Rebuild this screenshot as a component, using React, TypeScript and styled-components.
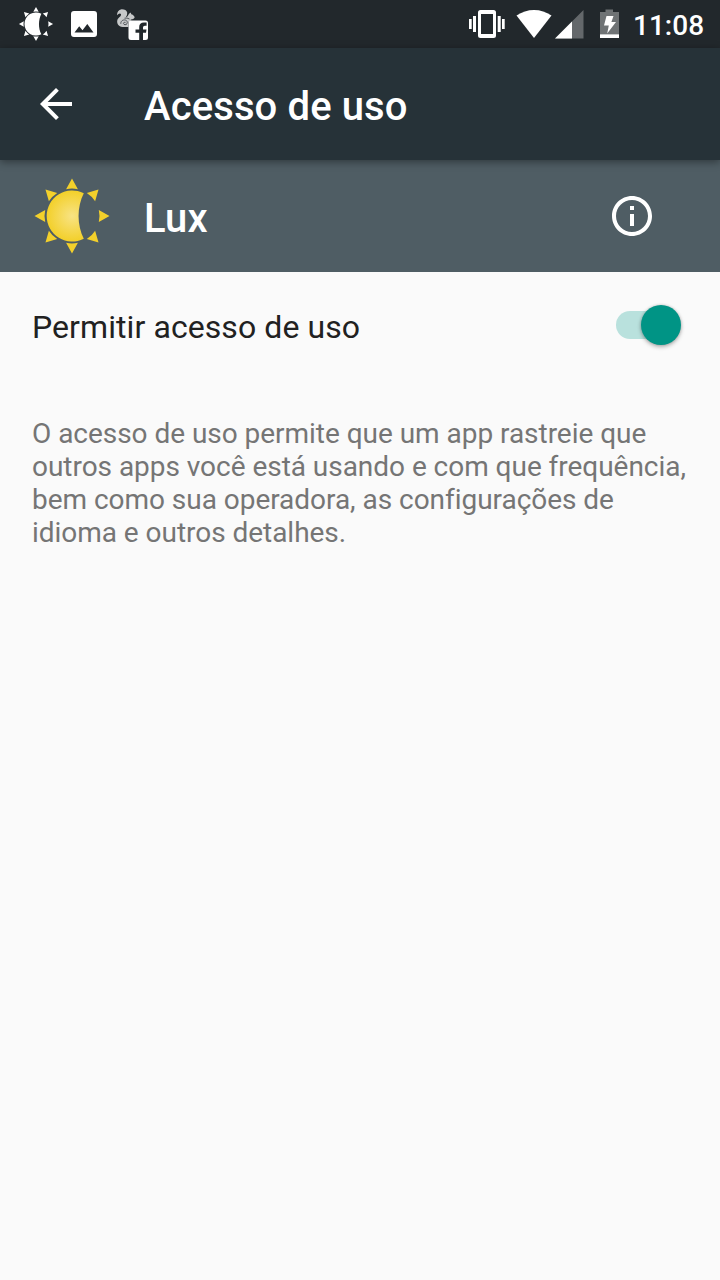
import React, { useState } from "react";
import styled, { createGlobalStyle } from "styled-components";

const GlobalStyle = createGlobalStyle`
  * { box-sizing: border-box; }
  html, body { margin: 0; background: #fafafa; }
  body { font-family: Roboto, "Liberation Sans", sans-serif; }
`;

const Screen = styled.div`
  width: 720px;
  min-height: 1280px;
  display: flex;
  flex-direction: column;
  background: #fafafa;
`;

const StatusBar = styled.div`
  height: 48px;
  display: flex;
  justify-content: space-between;
  background: #22282c;
`;

const StatusGroup = styled.div`
  display: flex;
  height: 48px;
  svg { display: block; }
`;

const Clock = styled.time`
  width: 96px;
  padding-left: 9px;
  font-size: 28px;
  line-height: 52px;
  font-weight: 500;
  color: #fff;
  white-space: nowrap;
`;

const AppBar = styled.header`
  height: 112px;
  display: flex;
  align-items: center;
  background: #263238;
  box-shadow: 0 2px 8px rgba(0, 0, 0, 0.4);
  z-index: 1;
`;

const IconButton = styled.button<{ $width: number }>`
  width: ${(p) => p.$width}px;
  height: 112px;
  padding: 0;
  border: 0;
  display: flex;
  align-items: center;
  justify-content: center;
  background: none;
  color: #fff;
`;

const Title = styled.h1`
  margin: 0;
  padding: 6px 0 0 32px;
  font-size: 40px;
  line-height: 48px;
  font-weight: 500;
  letter-spacing: 0.12px;
  color: #fff;
`;

const AppHeader = styled.section`
  height: 112px;
  padding-right: 32px;
  display: flex;
  align-items: center;
  background: #4f5d64;
`;

const AppIcon = styled.div`
  width: 112px;
  padding-left: 32px;
  svg { display: block; }
`;

const Spacer = styled.div`
  flex: 1;
`;

const PreferenceRow = styled.div`
  height: 112px;
  padding: 0 36px 0 32px;
  display: flex;
  align-items: center;
  justify-content: space-between;
`;

const PreferenceLabel = styled.span`
  margin-bottom: 2px;
  font-size: 32px;
  line-height: 38px;
  letter-spacing: 0.08px;
  color: #212121;
`;

const Track = styled.button<{ $on: boolean }>`
  width: 64px;
  height: 28px;
  margin: 0 4px 6px 0;
  padding: 0;
  border: 0;
  border-radius: 14px;
  display: flex;
  align-items: center;
  justify-content: ${(p) => (p.$on ? "flex-end" : "flex-start")};
  background: ${(p) => (p.$on ? "#b9e1dd" : "#bdbdbd")};
`;

const Thumb = styled.span<{ $on: boolean }>`
  width: 40px;
  height: 40px;
  flex: none;
  margin-right: -1px;
  border-radius: 50%;
  background: ${(p) => (p.$on ? "#009485" : "#f1f1f1")};
  box-shadow: 0 2px 4px rgba(0, 0, 0, 0.28), 0 0 3px rgba(0, 0, 0, 0.18);
`;

const Description = styled.p`
  margin: 33px 0 0;
  padding: 0 24px 0 32px;
  font-size: 28px;
  line-height: 33px;
  letter-spacing: -0.035px;
  color: #757575;
`;

const ANGLES = [0, 45, 90, 135, 180, 225, 270, 315];

function Sun({ fill }: { fill: string }) {
  return (
    <g fill={fill}>
      <path d="M11.8 -22.7A25.5 25.5 0 1 0 11.8 22.7C4.8 9 4.8 -9 11.8 -22.7Z" />
      {ANGLES.map((a) => (
        <path key={a} d="M0 -37.5L5.9 -26.8Q0 -28.2 -5.9 -26.8Z" transform={`rotate(${a})`} />
      ))}
    </g>
  );
}

function NotificationIcons() {
  return (
    <svg width="160" height="48" viewBox="0 0 160 48" fill="#fff">
      <g transform="translate(36 24) scale(.455)">
        <Sun fill="#fff" />
      </g>
      <path
        fillRule="evenodd"
        d="M74 11h20a3 3 0 0 1 3 3v20a3 3 0 0 1-3 3H74a3 3 0 0 1-3-3V14a3 3 0 0 1 3-3ZM74.5 32.5h19L87.3 24 82.5 30.2 79.2 26.2Z"
      />
      <path
        fill="#c6c8c9"
        d="M117 15.2Q117 10.2 121.500 9.200Q126 9 127.200 12.500Q127.600 15.500 125.600 17.600L127.600 16.200L129 13.800L130.700 12.500L131.300 14.300Q134.500 15.300 134.600 17.800Q133.500 19.800 130.500 19.600L131.500 20.500Q128.500 20.700 128.300 23V27H122.500C118.500 26.700 116.600 23.400 117.300 20.300C118 17.600 121.500 16.500 121 14Q119.500 12.500 117 15.200Z"
      />
      <g fill="none" stroke="#51565a" strokeWidth="1">
        <path d="M120.800 23.800C120.500 19.200 127 18.600 127.300 22.400C127.500 25.200 123.500 25.500 123.500 23.200Q124 21.700 125.500 22.400M124.500 18.200Q127 17.500 129.500 19" />
      </g>
      <path
        fillRule="evenodd"
        d="M131 20.5h14.5a2.5 2.5 0 0 1 2.5 2.5v14.5a2.5 2.5 0 0 1-2.5 2.5H143v-7.2h3l.5-3.3H143v-2q0-1.7 1.8-1.7h1.8V22.5H144q-4.8 0-4.8 4.5v2.5H135.5v3.3h3.7V40H131a2.5 2.5 0 0 1-2.5-2.5V23a2.5 2.5 0 0 1 2.5-2.5Z"
      />
    </svg>
  );
}

function SystemIcons() {
  return (
    <svg width="160" height="48" viewBox="464 0 160 48" fill="#fff">
      <path d="M469 19h2.7v10H469zM473 16h3v16h-3zM497.7 16h3v16h-3zM502 19h2.7v10H502z" />
      <path
        fillRule="evenodd"
        d="M480.5 10h13a2.5 2.5 0 0 1 2.5 2.5v23a2.5 2.5 0 0 1-2.5 2.5h-13a2.5 2.5 0 0 1-2.5-2.5v-23a2.5 2.5 0 0 1 2.5-2.5ZM481 14v20h12V14Z"
      />
      <path d="M516.5 15.6Q524.5 10 534 10T551.5 15.6L534 38Z" />
      <path d="M583.5 10V38.5H555Z" opacity=".3" />
      <path d="M572 21.5V38.5H555Z" />
      <path d="M605.5 9.5h7.500V12h6v22h-19V12h5.500Z" opacity=".35" />
      <path d="M600 34.2h19V38H600ZM606.5 16h7l-2.1 6H616L607.2 33.5 608.8 25.5H604Z" />
    </svg>
  );
}

export default function App() {
  const [allowed, setAllowed] = useState(true);
  return (
    <Screen>
      <GlobalStyle />
      <StatusBar>
        <StatusGroup>
          <NotificationIcons />
        </StatusGroup>
        <StatusGroup>
          <SystemIcons />
          <Clock>11:08</Clock>
        </StatusGroup>
      </StatusBar>
      <AppBar>
        <IconButton $width={112} aria-label="Voltar">
          <svg width="48" height="48" viewBox="0 0 24 24" fill="currentColor">
            <path d="M20 11H7.83l5.59-5.59L12 4l-8 8 8 8 1.41-1.41L7.83 13H20v-2z" />
          </svg>
        </IconButton>
        <Title>Acesso de uso</Title>
      </AppBar>
      <AppHeader>
        <AppIcon>
          <svg width="80" height="80" viewBox="-40 -40 80 80">
            <defs>
              <radialGradient id="sun" gradientUnits="userSpaceOnUse" cx="0" cy="0" r="25">
                <stop offset="0" stopColor="#f8e384" />
                <stop offset="1" stopColor="#f3d02b" />
              </radialGradient>
            </defs>
            <Sun fill="url(#sun)" />
          </svg>
        </AppIcon>
        <Title as="h2">Lux</Title>
        <Spacer />
        <IconButton $width={112} aria-label="Informações">
          <svg width="48" height="48" viewBox="0 0 24 24" fill="currentColor">
            <path d="M11 17h2v-6h-2v6zm1-15C6.48 2 2 6.48 2 12s4.48 10 10 10 10-4.48 10-10S17.52 2 12 2zm0 18c-4.41 0-8-3.59-8-8s3.59-8 8-8 8 3.59 8 8-3.59 8-8 8zM11 9h2V7h-2v2z" />
          </svg>
        </IconButton>
      </AppHeader>
      <PreferenceRow>
        <PreferenceLabel>Permitir acesso de uso</PreferenceLabel>
        <Track
          $on={allowed}
          role="switch"
          aria-checked={allowed}
          onClick={() => setAllowed(!allowed)}
        >
          <Thumb $on={allowed} />
        </Track>
      </PreferenceRow>
      <Description>
        O acesso de uso permite que um app rastreie que
        <br />
        outros apps você está usando e com que frequência,
        <br />
        bem como sua operadora, as configurações de
        <br />
        idioma e outros detalhes.
      </Description>
    </Screen>
  );
}
